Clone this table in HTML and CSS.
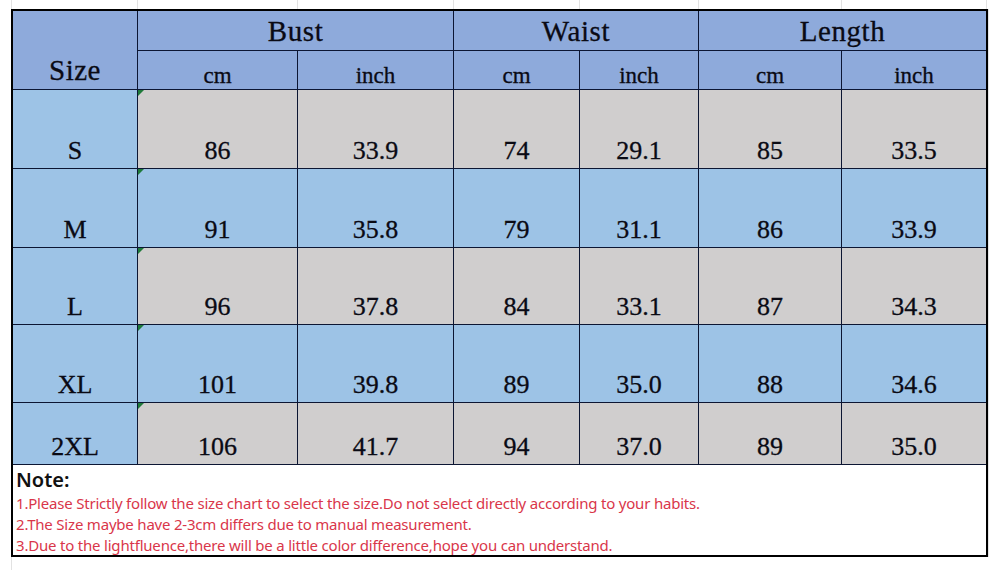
FILE: index.html
```html
<!DOCTYPE html>
<html lang="en">
<head>
<meta charset="utf-8">
<title>Size Chart</title>
<link rel="stylesheet" href="styles.css">
</head>
<body>
<div class="page">
  <div class="topgrid">
    <span class="g g-size"></span><span class="g g-c1"></span><span class="g g-c2"></span><span class="g g-c3"></span><span class="g g-c4"></span><span class="g g-c5"></span><span class="g g-c6"></span>
  </div>
  <div class="chart">
    <div class="cell head size-head">Size</div>
    <div class="cell head group span2">Bust</div>
    <div class="cell head group span2">Waist</div>
    <div class="cell head group span2">Length</div>
    <div class="cell head unit">cm</div>
    <div class="cell head unit">inch</div>
    <div class="cell head unit">cm</div>
    <div class="cell head unit">inch</div>
    <div class="cell head unit">cm</div>
    <div class="cell head unit">inch</div>

    <div class="cell label">S</div>
    <div class="cell gray mark">86</div><div class="cell gray">33.9</div><div class="cell gray">74</div><div class="cell gray">29.1</div><div class="cell gray">85</div><div class="cell gray">33.5</div>

    <div class="cell label">M</div>
    <div class="cell blue mark">91</div><div class="cell blue">35.8</div><div class="cell blue">79</div><div class="cell blue">31.1</div><div class="cell blue">86</div><div class="cell blue">33.9</div>

    <div class="cell label">L</div>
    <div class="cell gray mark">96</div><div class="cell gray">37.8</div><div class="cell gray">84</div><div class="cell gray">33.1</div><div class="cell gray">87</div><div class="cell gray">34.3</div>

    <div class="cell label">XL</div>
    <div class="cell blue mark">101</div><div class="cell blue">39.8</div><div class="cell blue">89</div><div class="cell blue">35.0</div><div class="cell blue">88</div><div class="cell blue">34.6</div>

    <div class="cell label">2XL</div>
    <div class="cell gray mark">106</div><div class="cell gray">41.7</div><div class="cell gray">94</div><div class="cell gray">37.0</div><div class="cell gray">89</div><div class="cell gray">35.0</div>

    <div class="note">
      <div class="note-title">Note:</div>
      <p class="note-line">1.Please Strictly follow the size chart to select the size.Do not select directly according to your habits.</p>
      <p class="note-line">2.The Size maybe have 2-3cm differs due to manual measurement.</p>
      <p class="note-line">3.Due to the lightfluence,there will be a little color difference,hope you can understand.</p>
    </div>
  </div>
  <div class="bottomgrid"></div>
</div>
</body>
</html>
```

FILE: styles.css
```css
* { box-sizing: border-box; }
html, body { margin: 0; padding: 0; background: #ffffff; }
.page {
  width: 998px;
  height: 570px;
  padding-left: 11px;
  overflow: hidden;
}
.topgrid {
  height: 9px;
  display: grid;
  grid-template-columns: 126px 160px 156px 126px 119px 143px 145px;
  border-left: 1px solid #e2e2e2;
}
.g { border-right: 1px solid #e2e2e2; }
.chart {
  width: 977px;
  display: grid;
  grid-template-columns: 124px 159px 155px 125px 118px 142px 144px;
  grid-template-rows: 39px 38px 78px 78px 76px 77px 61px 90px;
  gap: 1px;
  background: #0c1633;
  border: 2px solid #000000;
  font-family: "Liberation Serif", "DejaVu Serif", serif;
  color: #0a0a14;
  box-shadow: 1px 0 0 #e4e4e4;
}
.cell {
  display: flex;
  align-items: flex-end;
  justify-content: center;
  position: relative;
  font-size: 26px;
  line-height: 26px;
  padding-bottom: 4px;
  -webkit-text-stroke: 0.3px #0a0a14;
}
.head { background: #8eaadb; }
.size-head {
  grid-row: 1 / span 2;
  font-size: 29px;
  line-height: 29px;
  padding-bottom: 4px;
  letter-spacing: 0.5px;
}
.group {
  font-size: 29px;
  line-height: 29px;
  align-items: center;
  padding-bottom: 0;
  padding-top: 1px;
  letter-spacing: 0.6px;
}
.span2 { grid-column: span 2; }
.unit {
  font-size: 23px;
  line-height: 23px;
  padding-bottom: 2px;
}
.label { background: #9dc3e6; }
.gray { background: #d0cece; }
.blue { background: #9dc3e6; }
.mark::before {
  content: "";
  position: absolute;
  left: 0;
  top: 0;
  width: 0;
  height: 0;
  border-top: 6px solid #1f7a3a;
  border-right: 6px solid transparent;
}
.note {
  grid-column: 1 / -1;
  background: #ffffff;
  padding: 4px 0 0 3px;
  font-family: "Noto Sans", "Liberation Sans", sans-serif;
}
.note-title {
  font-size: 20px;
  line-height: 22px;
  font-weight: 600;
  color: #111111;
  margin-bottom: 2px;
}
.note-line {
  margin: 0;
  font-size: 15px;
  line-height: 21px;
  color: #d9364a;
  letter-spacing: -0.2px;
}
.bottomgrid {
  height: 14px;
  width: 1px;
  border-left: 1px solid #e2e2e2;
}
```
